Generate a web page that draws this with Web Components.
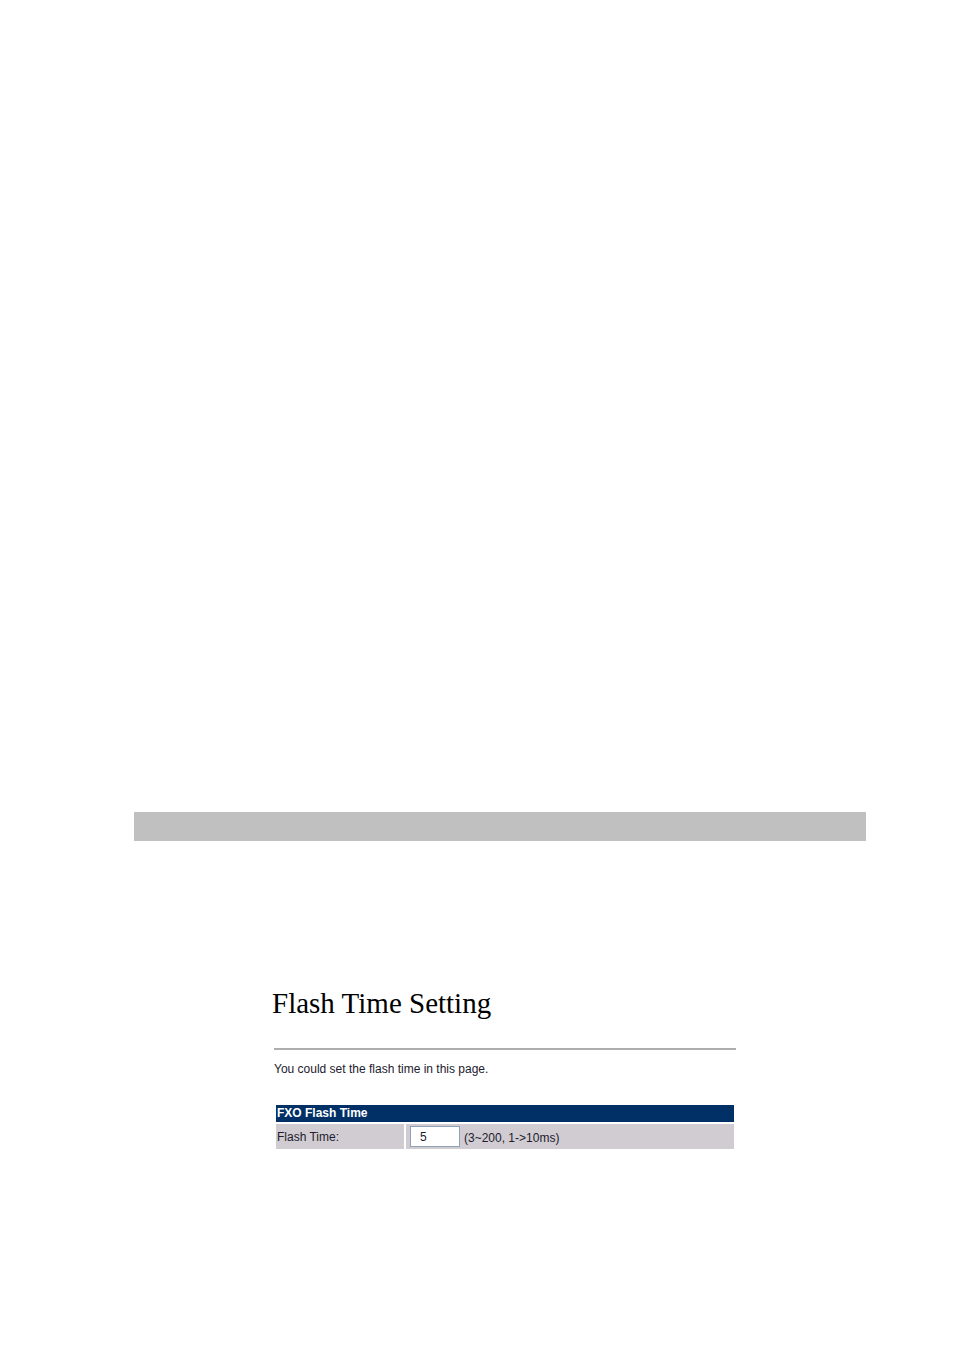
<!DOCTYPE html>
<html lang="en">
<head>
<meta charset="utf-8">
<meta name="viewport" content="width=device-width, initial-scale=1">
<title>Flash Time Setting</title>
<style>
    body{
        margin: 0;
        background: #fff;
        color: #221b2e;
        font: 12px/16px "Liberation Sans", Arial, sans-serif;
    }
</style>
</head>
<body>
<manual-page>
    <section-band slot="band"></section-band>
    <setting-panel>
        <span slot="title">Flash Time Setting</span>
        <span slot="intro">You could set the flash time in this page.</span>
        <flash-time value="5"></flash-time>
    </setting-panel>
</manual-page>

<script>
// page: empty upper part, grey band, then the content
class ManualPage extends HTMLElement{
    constructor(){
        super()
        this.attachShadow({mode: 'open'})
    }
    connectedCallback(){
        this.shadowRoot.innerHTML = `
            <style>
                :host{
                    display: block;
                    padding: 812px 88px 200px 134px;
                }
                main{
                    padding: 144px 130px 0 140px;
                }
            </style>
            <slot name="band"></slot>
            <main><slot></slot></main>
        `
    }
}

class SectionBand extends HTMLElement{
    constructor(){
        super()
        this.attachShadow({mode: 'open'})
    }
    connectedCallback(){
        this.shadowRoot.innerHTML = `
            <style>
                :host{
                    display: block;
                    height: 29px;
                    background: #c0c0c0;
                }
            </style>
        `
    }
}

// title, rule and intro, with the form below
class SettingPanel extends HTMLElement{
    constructor(){
        super()
        this.attachShadow({mode: 'open'})
    }
    connectedCallback(){
        this.shadowRoot.innerHTML = `
            <style>
                :host{
                    display: block;
                }
                h1{
                    margin: 0 0 0 -2px;
                    color: #000;
                    font: 29px/36px "Liberation Serif", "Times New Roman", serif;
                }
                hr{
                    height: 2px;
                    margin: 27px 0 11px;
                    border: 0;
                    background: #b0aeac;
                }
                p{
                    margin: 0 0 26px;
                }
            </style>
            <h1><slot name="title"></slot></h1>
            <hr>
            <p><slot name="intro"></slot></p>
            <slot></slot>
        `
    }
}

class FlashTime extends HTMLElement{
    constructor(){
        super()
        this.attachShadow({mode: 'open'})
    }
    static get styles(){
        return `
            :host{
                display: block;
            }
            table{
                width: 100%;
                border-collapse: separate;
                border-spacing: 2px;
                table-layout: fixed;
            }
            col.name{
                width: 128px;
            }
            th, td{
                padding: 0 1px;
                text-align: left;
            }
            thead th{
                height: 17px;
                background: #003066;
                color: #fff;
                line-height: 17px;
            }
            tbody th, td{
                height: 25px;
                background: #d1ccd2;
                font-weight: normal;
            }
            td{
                padding-left: 4px;
            }
            .field{
                display: flex;
                align-items: center;
                gap: 4px;
            }
            input{
                box-sizing: border-box;
                width: 50px;
                height: 21px;
                padding: 0 9px;
                border: 1px solid #8fa3b8;
                background: #fff;
                color: inherit;
                font: inherit;
            }
            .hint{
                padding-top: 2px;
            }
        `
    }
    connectedCallback(){
        this.render()
    }
    render(){
        this.shadowRoot.innerHTML = `
            <style>${FlashTime.styles}</style>
            <table>
                <colgroup><col class="name"><col></colgroup>
                <thead>
                    <tr><th colspan="2">FXO Flash Time</th></tr>
                </thead>
                <tbody>
                    <tr>
                        <th scope="row"><label for="time">Flash Time:</label></th>
                        <td>
                            <div class="field">
                                <input id="time" type="text" value="${this.getAttribute('value')}" aria-describedby="hint">
                                <span class="hint" id="hint">(3~200, 1-&gt;10ms)</span>
                            </div>
                        </td>
                    </tr>
                </tbody>
            </table>
        `
    }
}

customElements.define('manual-page', ManualPage)
customElements.define('section-band', SectionBand)
customElements.define('setting-panel', SettingPanel)
customElements.define('flash-time', FlashTime)
</script>
</body>
</html>
